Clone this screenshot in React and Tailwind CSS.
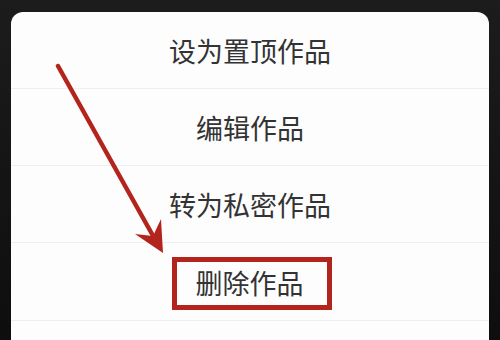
import React from "react";

const items = ["设为置顶作品", "编辑作品", "转为私密作品"];

const App = () => {
  return (
    <div className="relative w-[500px] h-[340px] overflow-hidden bg-[#141414] pt-[12px] px-[11px] bg-gradient-to-b from-[#1c1c1c] to-[#0e0e0e]">
      <div
        className="h-full bg-[#fdfdfd] rounded-t-[12px] flex flex-col text-[#333333] text-[27px]"
        style={{ fontFamily: '"Noto Sans CJK SC", "Noto Sans", sans-serif' }}
      >
        {items.map((label) => (
          <div
            key={label}
            className="h-[77px] shrink-0 flex items-center justify-center border-b border-[#efefef] pt-[3px]"
          >
            {label}
          </div>
        ))}
        <div className="h-[78px] shrink-0 flex items-center justify-center border-b border-[#efefef] pt-[4px] pl-[3px]">
          <div className="w-[160px] h-[53px] border-[5px] border-[#b3241c] flex items-center justify-center pr-[4px]">
            删除作品
          </div>
        </div>
        <div className="flex-1" />
      </div>

      {/* red arrow drawn over the menu */}
      <svg className="absolute inset-0 pointer-events-none" width="500" height="340" viewBox="0 0 500 340">
        <line x1="58" y1="66" x2="152" y2="234" stroke="#b3241c" strokeWidth="4.5" strokeLinecap="round" />
        <polygon points="163,253 135,234 153,236 161,219" fill="#b3241c" />
      </svg>
    </div>
  );
};

export default App;
